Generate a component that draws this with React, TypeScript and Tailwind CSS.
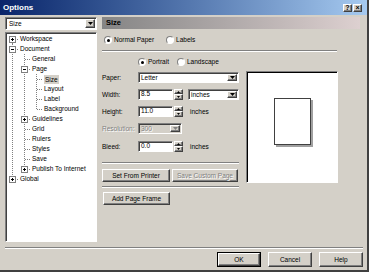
import React from 'react';

const raised =
  'border border-t-white border-l-white border-r-[#404040] border-b-[#404040] shadow-[inset_-1px_-1px_0_#808080]';
const sunken =
  'border border-t-[#808080] border-l-[#808080] border-r-white border-b-white shadow-[inset_1px_1px_0_#404040]';
const disabledText = 'text-[#808080] [text-shadow:1px_1px_0_#fff]';

type Cell = 'v' | 'tee' | 'end' | 'start';

const tree: { label: string; cells: Cell[]; box?: '+' | '-'; selected?: boolean }[] = [
  { label: 'Workspace', cells: ['start'], box: '+' },
  { label: 'Document', cells: ['tee'], box: '-' },
  { label: 'General', cells: ['v', 'tee'] },
  { label: 'Page', cells: ['v', 'tee'], box: '-' },
  { label: 'Size', cells: ['v', 'v', 'tee'], selected: true },
  { label: 'Layout', cells: ['v', 'v', 'tee'] },
  { label: 'Label', cells: ['v', 'v', 'tee'] },
  { label: 'Background', cells: ['v', 'v', 'end'] },
  { label: 'Guidelines', cells: ['v', 'tee'], box: '+' },
  { label: 'Grid', cells: ['v', 'tee'] },
  { label: 'Rulers', cells: ['v', 'tee'] },
  { label: 'Styles', cells: ['v', 'tee'] },
  { label: 'Save', cells: ['v', 'tee'] },
  { label: 'Publish To Internet', cells: ['v', 'end'], box: '+' },
  { label: 'Global', cells: ['end'], box: '+' },
];

const TreeCell = ({ type, box }: { type: Cell; box?: '+' | '-' }) => (
  <svg width="12" height="10" className="shrink-0" shapeRendering="crispEdges">
    <g stroke="#808080" strokeDasharray="1 1">
      {(type === 'v' || type === 'tee') && <line x1="5.5" y1="0" x2="5.5" y2="10" />}
      {type === 'end' && <line x1="5.5" y1="0" x2="5.5" y2="6" />}
      {type === 'start' && <line x1="5.5" y1="5" x2="5.5" y2="10" />}
      {type !== 'v' && <line x1="6" y1="5.5" x2="12" y2="5.5" />}
    </g>
    {box && (
      <g>
        <rect x="2.5" y="2.5" width="6" height="6" fill="#fff" stroke="#808080" />
        <line x1="4" y1="5.5" x2="7" y2="5.5" stroke="#000" />
        {box === '+' && <line x1="5.5" y1="4" x2="5.5" y2="7" stroke="#000" />}
      </g>
    )}
  </svg>
);

const DropButton = ({ disabled }: { disabled?: boolean }) => (
  <div className={`w-[10px] h-full shrink-0 bg-[#d4d0c8] flex items-center justify-center ${raised}`}>
    <svg width="5" height="3" viewBox="0 0 5 3">
      <path d="M0 0h5L2.5 3z" fill={disabled ? '#808080' : '#000'} />
    </svg>
  </div>
);

const Combo = ({ value, w, disabled }: { value: string; w: string; disabled?: boolean }) => (
  <div className={`${w} h-[11px] ${sunken} ${disabled ? 'bg-[#d4d0c8]' : 'bg-white'} flex items-stretch p-[1px]`}>
    <span className={`flex-1 pl-[1px] leading-[8px] ${disabled ? disabledText : ''}`}>{value}</span>
    <DropButton disabled={disabled} />
  </div>
);

const Spinner = () => (
  <div className="w-[9px] h-[11px] ml-[1px] flex flex-col shrink-0">
    <div className={`h-[5px] bg-[#d4d0c8] flex items-center justify-center ${raised}`}>
      <svg width="3" height="2" viewBox="0 0 3 2">
        <path d="M0 2h3L1.5 0z" fill="#000" />
      </svg>
    </div>
    <div className={`h-[6px] bg-[#d4d0c8] flex items-center justify-center ${raised}`}>
      <svg width="3" height="2" viewBox="0 0 3 2">
        <path d="M0 0h3L1.5 2z" fill="#000" />
      </svg>
    </div>
  </div>
);

const Field = ({ value }: { value: string }) => (
  <div className={`w-[35px] h-[11px] bg-white ${sunken} pl-[2px] leading-[8px]`}>{value}</div>
);

const Radio = ({ label, checked }: { label: string; checked?: boolean }) => (
  <div className="flex items-center h-[10px]">
    <div className="w-[8px] h-[8px] rounded-full bg-white border border-t-[#808080] border-l-[#808080] border-r-white border-b-white flex items-center justify-center">
      {checked && <div className="w-[3px] h-[3px] rounded-full bg-black" />}
    </div>
    <span className="ml-[2px]">{label}</span>
  </div>
);

const Separator = ({ w }: { w: string }) => <div className={`${w} border-t border-t-[#808080] border-b border-b-white`} />;

const Button = ({ label, w, disabled, def }: { label: string; w: string; disabled?: boolean; def?: boolean }) => (
  <div className={`${w} ${def ? 'border border-black' : ''} h-full`}>
    <div className={`h-full bg-[#d4d0c8] ${raised} flex items-center justify-center ${disabled ? disabledText : ''}`}>
      {label}
    </div>
  </div>
);

const FormRow = ({ label, disabled, children }: { label: string; disabled?: boolean; children: React.ReactNode }) => (
  <div className="flex items-center">
    <span className={`w-[36px] shrink-0 ${disabled ? disabledText : ''}`}>{label}</span>
    {children}
  </div>
);

export default function App() {
  return (
    <div className="w-[369px] h-[272px] bg-[#d4d0c8] border-r-2 border-b-2 border-r-[#404040] border-b-[#404040] flex flex-col overflow-hidden text-black text-[6.5px] leading-[10px] font-['Liberation_Sans',Arial,sans-serif] select-none">
      {/* title bar */}
      <div className="h-[15px] shrink-0 flex items-center pl-[3px] pr-[5px] bg-gradient-to-r from-[#0a246a] to-[#a6caf0]">
        <span className="text-white font-bold text-[8px] flex-1">Options</span>
        <div className={`w-[9px] h-[8px] bg-[#d4d0c8] ${raised} flex items-center justify-center text-[7px] font-bold leading-none`}>?</div>
        <div className={`w-[9px] h-[8px] ml-[1px] bg-[#d4d0c8] ${raised} flex items-center justify-center text-[7px] font-bold leading-none`}>×</div>
      </div>

      <div className="flex mt-[2px] h-[225px] shrink-0">
        {/* left column */}
        <div className="ml-[5px] w-[92px] flex flex-col shrink-0">
          <div className={`h-[13px] bg-white ${sunken} flex items-stretch p-[1px]`}>
            <span className="flex-1 pl-[2px] leading-[10px]">Size</span>
            <DropButton />
          </div>
          <div className={`mt-[2px] h-[210px] bg-white ${sunken} pl-[1px] pt-[1px] flex flex-col`}>
            {tree.map((item) => (
              <div key={item.label} className="flex items-center h-[10px] shrink-0">
                {item.cells.map((c, i) => (
                  <TreeCell key={i} type={c} box={i === item.cells.length - 1 ? item.box : undefined} />
                ))}
                <span className={`ml-[1px] whitespace-nowrap ${item.selected ? 'bg-[#d4d0c8] px-[1px] leading-[9px]' : 'leading-[10px]'}`}>
                  {item.label}
                </span>
              </div>
            ))}
          </div>
        </div>

        {/* right column */}
        <div className="ml-[5px] w-[258px] flex flex-col">
          <div className="h-[12px] shrink-0 bg-gradient-to-r from-[#858585] to-[#ddd0d0] flex items-center pl-[4px]">
            <span className="font-bold text-[7.5px]">Size</span>
          </div>
          <div className="mt-[6px] flex items-center gap-[12px] pl-[2px]">
            <Radio label="Normal Paper" checked />
            <Radio label="Labels" />
          </div>
          <div className="mt-[5px]">
            <Separator w="w-[235px]" />
          </div>
          <div className="mt-[5px] flex items-center pl-[36px] gap-[8px]">
            <Radio label="Portrait" checked />
            <Radio label="Landscape" />
          </div>

          <div className="mt-[4px] flex">
            <div className="w-[137px] flex flex-col shrink-0">
              <div className="mt-[1px]">
                <FormRow label="Paper:">
                  <Combo value="Letter" w="w-[101px]" />
                </FormRow>
              </div>
              <div className="mt-[6px]">
                <FormRow label="Width:">
                  <Field value="8.5" />
                  <Spinner />
                  <div className="ml-[5px]">
                    <Combo value="inches" w="w-[51px]" />
                  </div>
                </FormRow>
              </div>
              <div className="mt-[6px]">
                <FormRow label="Height:">
                  <Field value="11.0" />
                  <Spinner />
                  <span className="ml-[7px]">inches</span>
                </FormRow>
              </div>
              <div className="mt-[6px]">
                <FormRow label="Resolution:" disabled>
                  <Combo value="300" w="w-[44px]" disabled />
                </FormRow>
              </div>
              <div className="mt-[7px]">
                <FormRow label="Bleed:">
                  <Field value="0.0" />
                  <Spinner />
                  <span className="ml-[7px]">inches</span>
                </FormRow>
              </div>
              <div className="mt-[10px]">
                <Separator w="w-[137px]" />
              </div>
              <div className="mt-[5px] h-[13px] flex gap-[2px]">
                <Button label="Set From Printer" w="w-[68px]" />
                <Button label="Save Custom Page" w="w-[66px]" disabled />
              </div>
              <div className="mt-[4px]">
                <Separator w="w-[137px]" />
              </div>
              <div className="mt-[4px] h-[13px] flex pl-[1px]">
                <Button label="Add Page Frame" w="w-[67px]" />
              </div>
            </div>

            {/* preview */}
            <div className={`ml-[7px] w-[92px] h-[112px] bg-white border border-t-[#808080] border-l-[#808080] border-r-white border-b-white shadow-[inset_1px_1px_0_#000] flex justify-center pt-[26px]`}>
              <div className="w-[37px] h-[47px] bg-white border border-[#404040] shadow-[2px_2px_0_#a0a0a0]" />
            </div>
          </div>
        </div>
      </div>

      <div className="mt-[5px] ml-[5px] mr-[4px] shrink-0">
        <Separator w="w-full" />
      </div>
      <div className="mt-[3px] h-[15px] shrink-0 flex justify-end gap-[7px] pr-[4px]">
        <Button label="OK" w="w-[44px]" def />
        <Button label="Cancel" w="w-[44px]" />
        <Button label="Help" w="w-[44px]" />
      </div>
    </div>
  );
}
